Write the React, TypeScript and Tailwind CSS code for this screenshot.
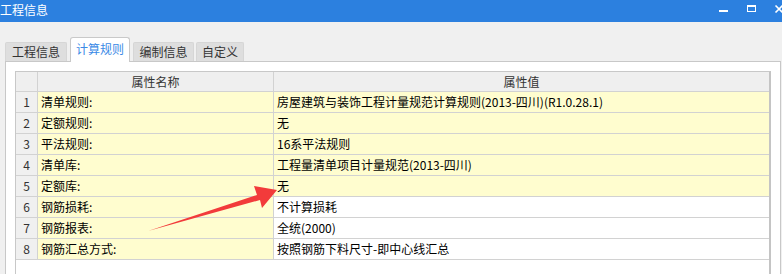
const rows = [
  { name: "清单规则:", value: "房屋建筑与装饰工程计量规范计算规则(2013-四川)(R1.0.28.1)", hl: true },
  { name: "定额规则:", value: "无", hl: true },
  { name: "平法规则:", value: "16系平法规则", hl: true },
  { name: "清单库:", value: "工程量清单项目计量规范(2013-四川)", hl: true },
  { name: "定额库:", value: "无", hl: true },
  { name: "钢筋损耗:", value: "不计算损耗", hl: false },
  { name: "钢筋报表:", value: "全统(2000)", hl: false },
  { name: "钢筋汇总方式:", value: "按照钢筋下料尺寸-即中心线汇总", hl: false },
];

const tabs = [
  { label: "工程信息", w: "w-[62px]", ml: "ml-[5px]" },
  { label: "计算规则", w: "w-[60px]", ml: "ml-[3px]", active: true },
  { label: "编制信息", w: "w-[61px]", ml: "ml-[3px]" },
  { label: "自定义", w: "w-[48px]", ml: "ml-[2px]" },
];

export default function App() {
  return (
    <div
      className="relative h-[274px] w-[782px] overflow-hidden bg-[#f0f0f0] text-[12px] text-black"
      style={{ fontFamily: '"Noto Sans CJK SC", "Noto Sans", sans-serif' }}
    >
      {/* Title bar */}
      <div className="flex h-[22px] items-start bg-[#2c80df]">
        <span className="pt-[2px] leading-[16px] text-white">工程信息</span>
        <svg className="ml-auto" width="64" height="22" viewBox="0 0 64 22">
          <rect x="1" y="10" width="9" height="2" fill="#fff" />
          <rect x="29.5" y="5.5" width="8" height="6" fill="none" stroke="#fff" strokeWidth="1" />
          <rect x="29" y="5" width="9" height="2" fill="#fff" />
          <path d="M57.5 5.5 L64.5 12.5 M64.5 5.5 L57.5 12.5" stroke="#fff" strokeWidth="1.6" />
        </svg>
      </div>

      {/* Tabs */}
      <div className="mt-[15px] flex h-[24px] items-end">
        {tabs.map((t) =>
          t.active ? (
            <div
              key={t.label}
              className={`${t.w} ${t.ml} relative z-10 -mb-px flex h-[25px] items-start justify-center rounded-t-[3px] border border-b-0 border-[#c9c9c9] bg-white pt-[3px] leading-[16px] text-[#3a8ae6]`}
            >
              {t.label}
            </div>
          ) : (
            <div
              key={t.label}
              className={`${t.w} ${t.ml} flex h-[19px] items-center justify-center rounded-t-[2px] border border-b-0 border-[#d6d6d6] bg-[#dedede] leading-[16px] text-[#333]`}
            >
              {t.label}
            </div>
          )
        )}
      </div>

      {/* Panel */}
      <div className="ml-[5px] h-[220px] w-[776px] border border-[#c8c8c8] bg-white pl-[9px] pt-[9px]">
        <div className="h-[220px] w-[756px] border-l border-r-2 border-t border-l-[#c8c8c8] border-r-[#c4c4c4] border-t-[#c8c8c8]">
          {/* Header */}
          <div className="flex h-[20px] border-b border-[#d2d2d2] bg-[#efefef] leading-[19px] text-[#333]">
            <div className="w-[22px] border-r border-[#d2d2d2]" />
            <div className="w-[236px] border-r border-[#d2d2d2] text-center">属性名称</div>
            <div className="flex-1 text-center">属性值</div>
          </div>
          {rows.map((r, i) => (
            <div key={i} className="flex h-[21px] border-b border-[#d2d2d2] leading-[20px]">
              <div className="w-[22px] border-r border-[#d2d2d2] bg-[#f0f0f0] text-center text-[#333]">
                {i + 1}
              </div>
              <div className="w-[236px] border-r border-[#d2d2d2] bg-[#fffdcf] pl-[3px]">{r.name}</div>
              <div className={`flex-1 pl-[3px] ${r.hl ? "bg-[#fffdcf]" : "bg-white"}`}>{r.value}</div>
            </div>
          ))}
        </div>
      </div>

      {/* Red annotation arrow */}
      <svg className="pointer-events-none absolute left-0 top-0" width="782" height="274">
        <polygon
          points="148,231 257,195 254,186 277,190 262,208 260,200"
          fill="#f23b3b"
        />
      </svg>
    </div>
  );
}
